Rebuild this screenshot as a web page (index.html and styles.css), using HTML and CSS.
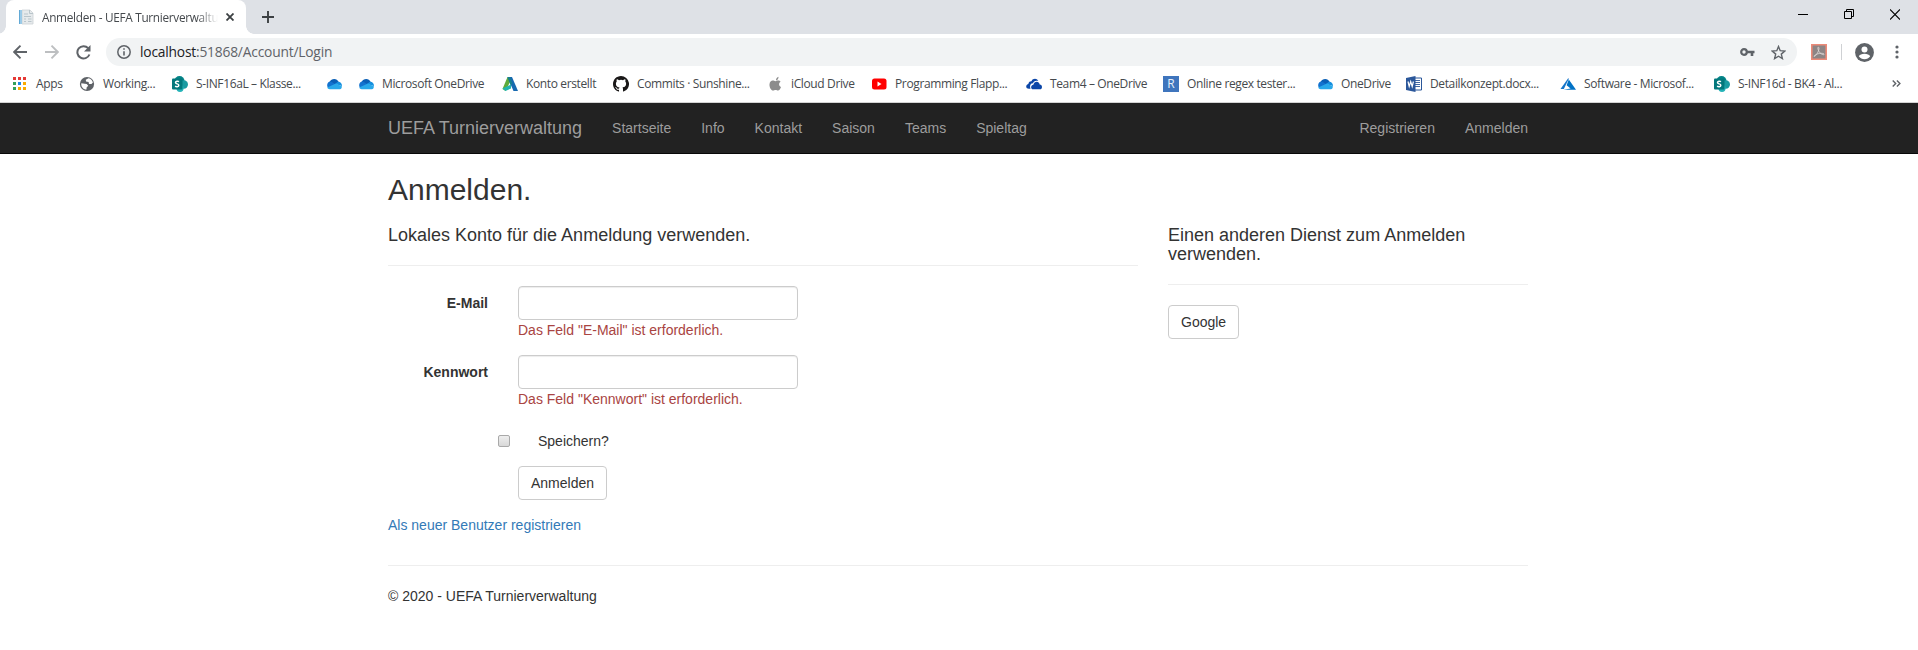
FILE: index.html
```html
<!DOCTYPE html>
<html lang="de">
<head>
<meta charset="utf-8">
<title>Anmelden - UEFA Turnierverwaltung</title>
<link rel="stylesheet" href="styles.css">
</head>
<body>
<svg class="defs" width="0" height="0">
  <symbol id="cloud" viewBox="0 0 16 16"><path d="M3 7C4.500 2.600 10.500 1.300 12.700 6L9 9z" fill="#0a5fb5"/><path d="M3.600 12.500A3.600 3.600 0 0 1 4.800 5.500L11 9l-2 3.500z" fill="#1272cf"/><path d="M9 8l3-2.300a3.700 3.700 0 0 1 3.900 4.300z" fill="#1590df"/><path d="M1.200 11.500 10 7.600l5.800 2.700c.3 1.200-.6 2.900-1.900 2.900H3.600c-1 0-1.900-.8-2.400-1.700z" fill="#28a8ea"/></symbol>
  <symbol id="sharepoint" viewBox="0 0 16 16"><circle cx="7.500" cy="5" r="5" fill="#038387"/><circle cx="11.800" cy="8.500" r="4.200" fill="#1a9ba1"/><circle cx="8" cy="12.300" r="3.600" fill="#25b3b8"/><rect y="2.500" width="10.500" height="11" rx="1" fill="#03787c"/><path d="M7 5.700C6 5 3.500 5 3.500 6.600 3.500 8.300 6.800 7.500 6.800 9.300 6.800 11 4.200 11 3.100 10.200" fill="none" stroke="#fff" stroke-width="1.500"/></symbol>
</svg>
<div class="tabstrip">
  <div class="tab">
    <svg class="favicon" width="16" height="16" viewBox="0 0 16 16"><path d="M4 1h8l3 3v11H4z" fill="#e6eaec" stroke="#cbd2d6" stroke-width=".8"/><path d="M11.500 1v3.500H15M6 5h4M6 7.500h7M6 10h2M10 10h3.500M6 12.500h2M10 12.500h3.500" stroke="#b9c5cb" fill="none"/><path d="M1 1h3v14H1z" fill="#9ccbe8"/><path d="M1.500 1v14" stroke="#62a9d6"/></svg>
    <span class="tab-title">Anmelden - UEFA Turnierverwaltung</span>
    <svg class="tab-close" width="8" height="8" viewBox="0 0 8 8"><path d="M.5.500l7 7m0-7-7 7" stroke="#3c4043" stroke-width="1.800"/></svg>
  </div>
  <svg class="new-tab" width="12" height="12" viewBox="0 0 12 12"><path d="M6 0v12M0 6h12" stroke="#3c4043" stroke-width="1.900"/></svg>
  <div class="window-controls">
    <svg width="10" height="11" viewBox="0 0 10 11"><path d="M0 5.500h10" stroke="#000"/></svg>
    <svg width="10" height="11" viewBox="0 0 10 11"><path d="M.5 2.500h7v7h-7zM2.500 2.500v-2h7v7h-2" fill="none" stroke="#000"/></svg>
    <svg width="10" height="11" viewBox="0 0 10 11"><path d="M0 .5l10 10m0-10-10 10" stroke="#000" stroke-width="1.100"/></svg>
  </div>
</div>
<div class="toolbar">
  <svg width="14" height="14" viewBox="0 0 14 14"><path d="M14 7H1.500M7.500.700 1.200 7l6.300 6.300" fill="none" stroke="#5f6368" stroke-width="1.900"/></svg>
  <svg class="forward" width="14" height="14" viewBox="0 0 14 14"><path d="M0 7h12.500M6.500.700 12.800 7l-6.300 6.300" fill="none" stroke="#bdbfc1" stroke-width="1.900"/></svg>
  <svg class="reload" width="15" height="15" viewBox="0 0 15 15"><path d="M12.200 3.200A6.200 6.200 0 1 0 13.400 9.500" fill="none" stroke="#5f6368" stroke-width="2"/><path d="M14.500 0v6.600H8z" fill="#5f6368"/></svg>
  <div class="omnibox">
    <svg width="14" height="14" viewBox="0 0 14 14"><circle cx="7" cy="7" r="6.200" fill="none" stroke="#5f6368" stroke-width="1.500"/><path d="M7 6.200v4.300M7 3.300v1.500" stroke="#5f6368" stroke-width="1.600"/></svg>
    <span class="url"><span class="host">localhost</span>:51868/Account/Login</span>
    <svg class="key" width="15" height="8" viewBox="0 0 15 8"><circle cx="4" cy="4" r="2.800" fill="none" stroke="#5f6368" stroke-width="2.200"/><path d="M7 2.700h7.500v2.600h-1.200V8h-2.600V5.300H7z" fill="#5f6368"/></svg>
    <svg class="star" width="15" height="15" viewBox="0 0 15 15"><path d="M7.500 1.500 9.200 5.700l4.600.4-3.500 3 1.100 4.500-3.900-2.400-3.900 2.400 1.100-4.500-3.500-3 4.600-.4z" fill="none" stroke="#5f6368" stroke-width="1.400"/></svg>
  </div>
  <svg class="pdf" width="16" height="16" viewBox="0 0 16 16"><path d="M.8.800h14.400v14.400H.8z" fill="#8d8585" stroke="#ec8a78" stroke-width="1.600"/><path d="M7.300 3.200c1.300 0 .5 3.500-.7 5.600S3.500 13 3 12.400c-.4-.8 3-2.700 5.700-3 2.200-.3 4.500.1 4.400.9-.2 1.100-3-.2-4.400-1.800C7.200 6.900 6.300 3.200 7.300 3.200z" fill="none" stroke="#dcd6d4" stroke-width=".9"/></svg>
  <span class="separator"></span>
  <svg class="avatar" width="19" height="19" viewBox="0 0 19 19"><circle cx="9.500" cy="9.500" r="9.400" fill="#5f6368"/><circle cx="9.500" cy="6.500" r="3" fill="#fff"/><path d="M3.800 13.200c1.200-3.400 10.200-3.400 11.400 0-2.600 4-8.800 4-11.400 0z" fill="#fff"/></svg>
  <svg class="dots" width="4" height="14" viewBox="0 0 4 14"><g fill="#5f6368"><circle cx="2" cy="2" r="1.600"/><circle cx="2" cy="7" r="1.600"/><circle cx="2" cy="12" r="1.600"/></g></svg>
</div>
<div class="bookmarks">
  <a><svg viewBox="0 0 16 16"><path d="M1 1h3v3H1zm5 0h3v3H6zm5 0h3v3h-3z" fill="#e53935"/><path d="M1 6h3v3H1zM1 11h3v3H1z" fill="#34a05a"/><path d="M6 6h3v3H6z" fill="#1e88e5"/><path d="M11 6h3v3h-3zM6 11h3v3H6zm5 0h3v3h-3z" fill="#f9ab00"/></svg><span>Apps</span></a>
  <a><svg viewBox="0 0 16 16"><circle cx="8" cy="8" r="7.100" fill="#5f6368"/><path d="M9.500 2.300 6.800 3.700 7 5.500l2.600.5.400 2h2.500l1.400-1.600c-.6-2-2-3.500-4.400-4.100zM2.300 7.200c-.4 3.400 1.700 6.100 5.200 6.400l.1-2 1.600-1.800L7.700 8z" fill="#fff"/></svg><span>Working...</span></a>
  <a><svg viewBox="0 0 16 16"><use href="#sharepoint"/></svg><span>S-INF16aL – Klasse...</span></a>
  <a><svg viewBox="0 0 16 16"><use href="#cloud"/></svg></a>
  <a><svg viewBox="0 0 16 16"><use href="#cloud"/></svg><span>Microsoft OneDrive</span></a>
  <a><svg viewBox="0 0 16 16"><path d="M5.500 1 .5 13l3 2 5-10z" fill="#5eab3b"/><path d="M.5 12.500 9 8.500v4L3.500 15z" fill="#22b5b0"/><path d="M5.500 1H10l6 14h-4.500z" fill="#1769b0"/><path d="M5.500 1H8l2.500 7-2 1L7 5z" fill="#167f8d"/></svg><span>Konto erstellt</span></a>
  <a><svg viewBox="0 0 16 16"><path fill="#191717" d="M8 0C3.580 0 0 3.580 0 8c0 3.540 2.290 6.530 5.470 7.590.4.070.55-.17.55-.38v-1.490c-2.230.48-2.700-.95-2.700-.95-.36-.92-.89-1.170-.89-1.170-.73-.5.050-.49.050-.49.8.060 1.230.83 1.230.83.720 1.220 1.870.87 2.330.66.070-.52.280-.87.510-1.070-1.780-.2-3.640-.89-3.640-3.950 0-.87.310-1.590.82-2.150-.08-.2-.36-1.020.08-2.120 0 0 .67-.21 2.200.82a7.600 7.600 0 0 1 4 0c1.530-1.040 2.200-.82 2.200-.82.440 1.100.160 1.920.08 2.120.51.560.82 1.270.82 2.150 0 3.070-1.870 3.750-3.650 3.950.29.250.54.730.54 1.480v2.200c0 .21.150.46.550.38A8 8 0 0 0 8 0z"/></svg><span>Commits · Sunshine...</span></a>
  <a><svg viewBox="0 0 16 16"><path d="M9 4.200C9 2.300 10.200 1 11.500.700 11.700 2.600 10.500 4 9 4.200zM8.400 5.200c.8 0 1.500-.7 2.700-.7s2 .5 2.500 1.200c-2.200 1.300-1.900 4.300.4 5.200-.6 1.600-1.700 3.700-3 3.700-.9 0-1.300-.5-2.400-.5s-1.500.5-2.400.5C4 14.600 2.200 11 2.500 8.300 2.700 5.900 4.200 4.600 5.800 4.600c1.100 0 1.800.6 2.600.6z" fill="#8c8c8c"/></svg><span>iCloud Drive</span></a>
  <a><svg viewBox="0 0 16 16"><rect x="1" y="2.500" width="14.500" height="11" rx="2.500" fill="#f00"/><path d="m6.500 5.500 4 2.500-4 2.500z" fill="#fff"/></svg><span>Programming Flapp...</span></a>
  <a><svg viewBox="0 0 16 16"><path d="M.2 10.500C.2 8.700 1.600 8 2.300 7.900 2.700 5.600 4.500 5 5.500 5.200 6.700 2.400 10.700 1.800 12.300 5 9.500 4 7.500 5.500 7 7.200 4 7 3.700 10.600 4.600 12.700H3C1.300 12.700.2 12 .2 10.500z" fill="#0b46a8"/><path d="M7.200 13.300c-2.600 0-3-3.900.2-4.500.6-3.800 5.600-4.100 6.300-.4 3 0 3 4.900.2 4.900z" fill="#0b46a8"/></svg><span>Team4 – OneDrive</span></a>
  <a><i class="regex">R</i><span>Online regex tester...</span></a>
  <a><svg viewBox="0 0 16 16"><use href="#cloud"/></svg><span>OneDrive</span></a>
  <a><svg viewBox="0 0 16 16"><path d="M8 2h7.500v12H8" fill="#fff" stroke="#2b579a"/><path d="M9 4.500h5M9 6.500h5M9 8.500h5M9 10.500h5" stroke="#2b579a" stroke-width=".9"/><path d="M0 2 9.500 0v16L0 14z" fill="#2b579a"/><path d="m2 5.500 1.200 5 1.500-5 1.500 5 1.200-5" fill="none" stroke="#fff" stroke-width="1.200"/></svg><span>Detailkonzept.docx...</span></a>
  <a><svg viewBox="0 0 16 16"><path d="M8 2.500.500 13h3.300L9 2.500z" fill="#1575c9"/><path d="M8.800 3.500 6.600 9.200l4 3.200L3.500 13.800H16z" fill="#0072c6"/></svg><span>Software - Microsof...</span></a>
  <a><svg viewBox="0 0 16 16"><use href="#sharepoint"/></svg><span>S-INF16d - BK4 - Al...</span></a>
  <svg class="more" viewBox="0 0 9 7"><path d="M.7.500l3 3-3 3M4.900.500l3 3-3 3" fill="none" stroke="#5f6368" stroke-width="1.400"/></svg>
</div>
<div class="page">
  <nav class="navbar">
    <div class="container nav-inner">
      <a class="brand">UEFA Turnierverwaltung</a>
      <a>Startseite</a><a>Info</a><a>Kontakt</a><a>Saison</a><a>Teams</a><a>Spieltag</a>
      <a class="push">Registrieren</a><a>Anmelden</a>
    </div>
  </nav>
  <main class="container content">
    <h2>Anmelden.</h2>
    <div class="columns">
      <section class="login">
        <h4>Lokales Konto für die Anmeldung verwenden.</h4>
        <hr>
        <div class="form-group">
          <label for="email">E-Mail</label>
          <div><input class="field" id="email" type="text"><span class="error">Das Feld "E-Mail" ist erforderlich.</span></div>
        </div>
        <div class="form-group">
          <label for="password">Kennwort</label>
          <div><input class="field" id="password" type="password"><span class="error">Das Feld "Kennwort" ist erforderlich.</span></div>
        </div>
        <div class="remember"><input type="checkbox" id="remember"><label for="remember">Speichern?</label></div>
        <div class="submit"><button class="button">Anmelden</button></div>
        <p><a class="link">Als neuer Benutzer registrieren</a></p>
      </section>
      <section class="social">
        <h4>Einen anderen Dienst zum Anmelden verwenden.</h4>
        <hr>
        <button class="button">Google</button>
      </section>
    </div>
    <hr>
    <footer><p>© 2020 - UEFA Turnierverwaltung</p></footer>
  </main>
</div>
</body>
</html>
```
FILE: styles.css
```css
* { box-sizing: border-box; }
body { margin: 0; background: #fff; color: #333; font: 14px/20px "Liberation Sans", Arial, sans-serif; height: 650px; overflow: hidden; }
svg { display: block; flex: none; }
.defs { position: absolute; }

/* Browser window */
.tabstrip, .toolbar, .bookmarks { font-family: "Open Sans", "Noto Sans", sans-serif; white-space: nowrap; }
.tabstrip { display: flex; height: 34px; background: #dee1e6; padding-left: 6px; }
.tab { position: relative; display: flex; align-items: center; width: 240px; height: 34px; padding: 0 12px; background: #fff; border-radius: 8px 8px 0 0; }
.tab::before, .tab::after { content: ""; position: absolute; bottom: 0; width: 8px; height: 8px; }
.tab::before { left: -8px; background: radial-gradient(circle at 0 0, transparent 7.5px, #fff 8px); }
.tab::after { right: -8px; background: radial-gradient(circle at 100% 0, transparent 7.5px, #fff 8px); }
.tab-title { width: 176px; margin-left: 8px; overflow: hidden; font-size: 11.8px; letter-spacing: -0.3px; color: #45494d; -webkit-mask-image: linear-gradient(90deg, #000 155px, transparent 176px); mask-image: linear-gradient(90deg, #000 155px, transparent 176px); }
.tab-close { margin-left: 8px; }
.new-tab { margin: 11px 0 0 16px; }
.window-controls { display: flex; gap: 36px; margin: 9px 18px 0 auto; }
.toolbar { display: flex; align-items: center; height: 36px; padding-left: 13px; }
.forward { margin-left: 18px; }
.reload { margin-left: 17px; }
.omnibox { display: flex; align-items: center; width: 1691px; height: 28px; margin-left: 15px; padding: 0 11px; border-radius: 14px; background: #f1f3f4; }
.url { margin-left: 9px; font-size: 13.8px; letter-spacing: -0.2px; color: #5f6368; }
.host { color: #202124; }
.key { margin-left: auto; }
.star { margin-left: 16px; }
.pdf { margin-left: 14px; }
.separator { width: 1px; height: 16px; margin-left: 14px; background: #cfd1d4; }
.avatar { margin-left: 13px; }
.dots { margin-left: 21px; }
.bookmarks { display: grid; grid-template-columns: 67px 93px 154px 32px 144px 111px 154px 104px 155px 137px 154px 89px 154px 154px 178px 9px; align-items: center; height: 33px; padding: 0 0 5px 12px; border-bottom: 1px solid #d3d3d3; }
.bookmarks a { display: flex; align-items: center; gap: 8px; font-size: 12px; letter-spacing: -0.37px; color: #45494d; }
.bookmarks a svg { width: 16px; height: 16px; }
.bookmarks .more { width: 9px; height: 7px; }
.regex { width: 16px; height: 16px; background: #3f75bd; color: #e8f0fa; font: 12px/16px "Open Sans", sans-serif; text-align: center; letter-spacing: 0; }

/* Site */
.page { padding-right: 2px; background: linear-gradient(#222 50px, #080808 50px 51px, #fff 51px); }
.container { width: 1170px; margin: 0 auto; padding: 0 15px; }
.nav-inner { display: flex; height: 50px; padding: 0; color: #9d9d9d; }
.nav-inner a { padding: 15px; }
.nav-inner .brand { font-size: 18px; }
.nav-inner .push { margin-left: auto; }
.content { display: flow-root; }
h2 { margin: 20px 0 10px; font-size: 30px; line-height: 33px; }
h4 { margin: 10px 0; font-size: 18px; line-height: 19px; }
h2, h4 { font-weight: 400; }
hr { height: 1px; margin: 20px 0; border: 0; background: #eee; }
p { margin: 0 0 10px; }
.columns { display: grid; grid-template-columns: 750px 360px; column-gap: 30px; }
.login, .social { display: flow-root; }
.form-group { display: grid; grid-template-columns: 100px 280px; column-gap: 30px; height: 54px; margin-bottom: 15px; }
.form-group label { padding-top: 7px; text-align: right; font-weight: 700; }
.field { display: block; width: 280px; height: 34px; padding: 6px 12px; border: 1px solid #ccc; border-radius: 4px; box-shadow: inset 0 1px 1px rgba(0,0,0,.075); background: #fff; }
.error { display: block; color: #a94442; }
.remember { display: flex; align-items: flex-start; gap: 28px; height: 27px; margin: 0 0 15px 110px; padding-top: 7px; }
.remember input { appearance: none; width: 12px; height: 12px; margin: 4px 0 0; border: 1px solid #a9a9a9; border-radius: 2px; background: linear-gradient(#eee, #d8d8d8); }
.submit { margin: 0 0 15px 130px; }
.button { display: block; height: 34px; padding: 6px 12px; border: 1px solid #ccc; border-radius: 4px; background: #fff; color: #333; font: inherit; }
.link { color: #337ab7; }
```
